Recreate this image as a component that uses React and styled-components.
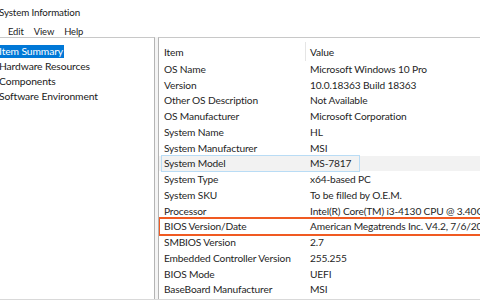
import styled, { createGlobalStyle } from "styled-components";

const GlobalStyle = createGlobalStyle`
	body {
		margin: 0;
		background: #ffffff;
		font-family: Lato, "Noto Sans", sans-serif;
		color: #1a1a1a;
	}
`;

const items = [
	["OS Name", "Microsoft Windows 10 Pro"],
	["Version", "10.0.18363 Build 18363"],
	["Other OS Description", "Not Available"],
	["OS Manufacturer", "Microsoft Corporation"],
	["System Name", "HL"],
	["System Manufacturer", "MSI"],
	["System Model", "MS-7817", "selected"],
	["System Type", "x64-based PC"],
	["System SKU", "To be filled by O.E.M."],
	["Processor", "Intel(R) Core(TM) i3-4130 CPU @ 3.40GHz, 3400 Mhz"],
	["BIOS Version/Date", "American Megatrends Inc. V4.2, 7/6/2015", "marked"],
	["SMBIOS Version", "2.7"],
	["Embedded Controller Version", "255.255"],
	["BIOS Mode", "UEFI"],
	["BaseBoard Manufacturer", "MSI"],
];

const tree = ["Item Summary", "Hardware Resources", "Components", "Software Environment"];

export default function App() {
	return (
		<>
			<GlobalStyle />
			<Window>
				<TitleBar>System Information</TitleBar>
				<MenuBar>
					<span>Edit</span>
					<span>View</span>
					<span>Help</span>
				</MenuBar>
				<Panes>
					<TreePane>
						{tree.map((t, i) => (
							<TreeNode key={t} $active={i === 0}>
								<span>{t}</span>
							</TreeNode>
						))}
					</TreePane>
					<ListPane>
						<HeaderRow>
							<HeadCell>Item</HeadCell>
							<HeadCell $last>Value</HeadCell>
						</HeaderRow>
						{items.map(([name, value, state]) => (
							<Row key={name} $state={state}>
								<Cell>{name}</Cell>
								<Cell $value>{value}</Cell>
							</Row>
						))}
					</ListPane>
				</Panes>
			</Window>
		</>
	);
}

const Window = styled.div`
	width: 480px;
	height: 300px;
	overflow: hidden;
	display: flex;
	flex-direction: column;
	background: #ffffff;
`;

const TitleBar = styled.div`
	height: 25px;
	line-height: 24px;
	font-size: 9.8px;
	letter-spacing: -0.15px;
	margin-left: -1px;
	white-space: nowrap;
`;

const MenuBar = styled.div`
	height: 12px;
	display: flex;
	align-items: center;
	gap: 10px;
	padding-left: 8px;
	font-size: 9.4px;
	letter-spacing: -0.1px;
`;

const Panes = styled.div`
	flex: 1;
	display: flex;
	gap: 3px;
	border-bottom: 1px solid #d9d9d9;
	background: #f4f4f4;
	min-height: 0;
`;

const TreePane = styled.div`
	width: 154px;
	flex-shrink: 0;
	background: #ffffff;
	border-top: 1px solid #c8c8c8;
	border-right: 1px solid #b4b4b4;
	padding-top: 6px;
	font-size: 10.3px;
	letter-spacing: -0.1px;
`;

const TreeNode = styled.div`
	height: 15px;
	display: flex;
	align-items: center;
	white-space: nowrap;
	margin-left: -2px;

	span {
		padding: 0 1px;
		background: ${(p) => (p.$active ? "#0078d7" : "transparent")};
		color: ${(p) => (p.$active ? "#ffffff" : "#1a1a1a")};
		line-height: 13px;
	}
`;

const ListPane = styled.div`
	flex: 1;
	min-width: 0;
	background: #ffffff;
	border-top: 1px solid #c8c8c8;
	border-left: 1px solid #b4b4b4;
	font-size: 10.2px;
	letter-spacing: -0.15px;
	overflow: hidden;
`;

const HeaderRow = styled.div`
	height: 23px;
	padding-top: 4px;
	box-sizing: border-box;
	display: grid;
	grid-template-columns: 147px 1fr;
`;

const HeadCell = styled.div`
	display: flex;
	align-items: center;
	padding-left: ${(p) => (p.$last ? "4px" : "5px")};
	border-right: ${(p) => (p.$last ? "none" : "1px solid #e5e5e5")};
	color: #1a1a1a;
`;

const Row = styled.div`
	position: relative;
	height: 15.75px;
	display: grid;
	grid-template-columns: 147px 1fr;
	align-items: center;
	white-space: nowrap;
	background: ${(p) => (p.$state === "selected" ? "#f2f2f2" : "transparent")};

	${(p) =>
		p.$state === "selected" &&
		`
		&::after {
			content: "";
			position: absolute;
			left: 2px;
			top: -1px;
			width: 197px;
			bottom: -1px;
			border: 1px solid #b9dcf5;
		}
	`}

	${(p) =>
		p.$state === "marked" &&
		`
		&::after {
			content: "";
			position: absolute;
			left: -1px;
			right: -4px;
			top: -2px;
			bottom: -2px;
			border: 2px solid #f05a22;
		}
	`}
`;

const Cell = styled.div`
	padding-left: ${(p) => (p.$value ? "4px" : "5px")};
	overflow: hidden;
	color: #1f1f1f;
`;
